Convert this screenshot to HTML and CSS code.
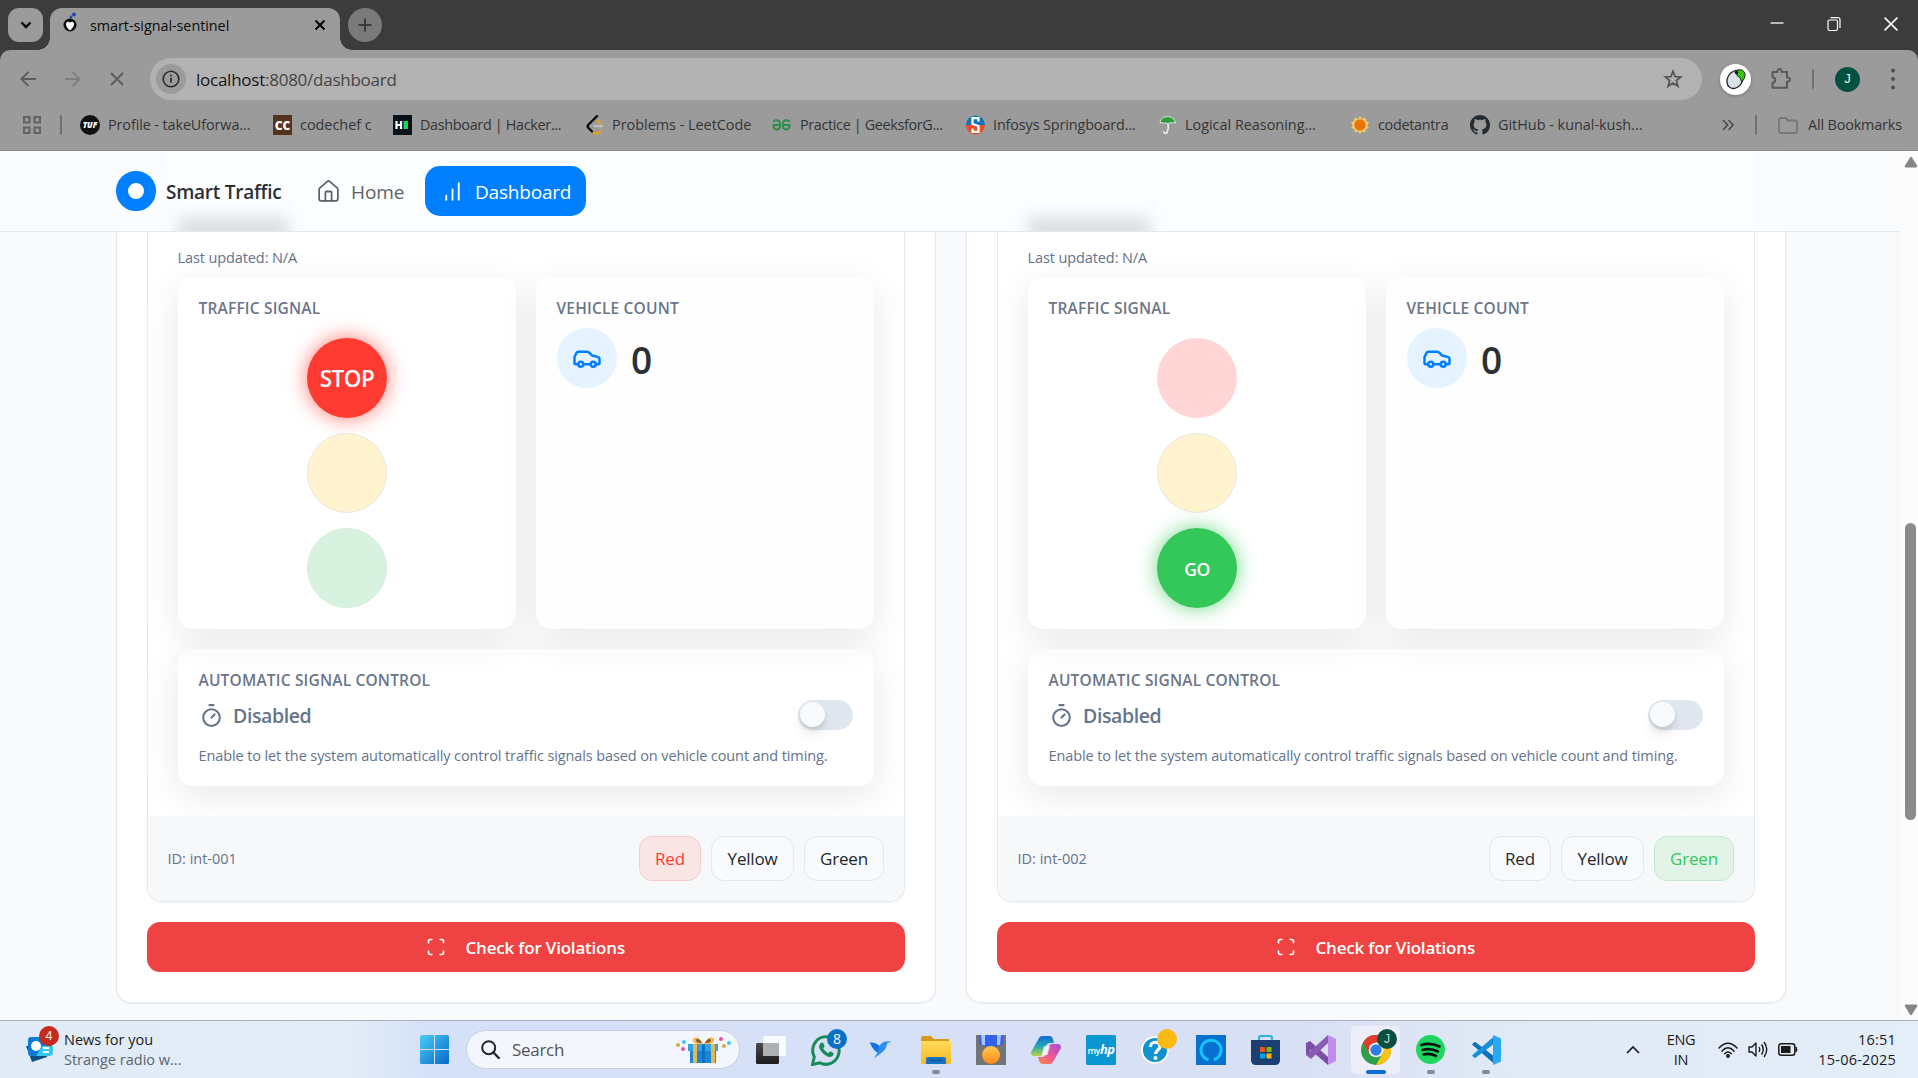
FILE: index.html
```html
<!DOCTYPE html>
<html lang="en">
<head>
<meta charset="utf-8">
<title>smart-signal-sentinel</title>
<link rel="stylesheet" href="styles.css">
</head>
<body>
<svg class="defs" aria-hidden="true">
  <defs>
    <linearGradient id="win" x1="0" y1="0" x2="1" y2="1"><stop offset="0" stop-color="#4ccdf9"/><stop offset="1" stop-color="#0469c9"/></linearGradient>
    <linearGradient id="gold" x1="0" y1="0" x2="0" y2="1"><stop offset="0" stop-color="#ffdc5e"/><stop offset="1" stop-color="#f7b71c"/></linearGradient>
    <linearGradient id="copA" x1="0" y1="0" x2="0" y2="1"><stop offset="0" stop-color="#1668d6"/><stop offset=".5" stop-color="#22a6b8"/><stop offset="1" stop-color="#b7d43a"/></linearGradient>
    <linearGradient id="copB" x1="1" y1="0" x2="0" y2="1"><stop offset="0" stop-color="#a64be0"/><stop offset=".55" stop-color="#ee5a90"/><stop offset="1" stop-color="#f98b45"/></linearGradient>
    <linearGradient id="dark" x1="0" y1="0" x2="0" y2="1"><stop offset="0" stop-color="#4a4a4a"/><stop offset="1" stop-color="#1b1b1b"/></linearGradient>
    <linearGradient id="medal" x1="0" y1="0" x2="0" y2="1"><stop offset="0" stop-color="#ffc94a"/><stop offset="1" stop-color="#ff8a1c"/></linearGradient>
    <symbol id="car" viewBox="0 0 24 24"><g fill="none" stroke="currentColor" stroke-width="2" stroke-linecap="round" stroke-linejoin="round"><path d="M19 17h2c.6 0 1-.4 1-1v-3c0-.9-.7-1.700-1.500-1.900C18.700 10.600 16 10 16 10s-1.300-1.400-2.200-2.300c-.5-.4-1.100-.7-1.800-.7H5c-.6 0-1.100.4-1.400.9l-1.400 2.900A3.700 3.700 0 0 0 2 12v4c0 .6.4 1 1 1h2"/><circle cx="7" cy="17" r="2"/><path d="M9 17h6"/><circle cx="17" cy="17" r="2"/></g></symbol>
    <symbol id="timer" viewBox="0 0 24 24"><g fill="none" stroke="currentColor" stroke-width="2" stroke-linecap="round" stroke-linejoin="round"><path d="M10 2h4M12 14l3-3"/><circle cx="12" cy="14" r="8"/></g></symbol>
    <symbol id="scan" viewBox="0 0 24 24"><path fill="none" stroke="currentColor" stroke-width="2" stroke-linecap="round" stroke-linejoin="round" d="M3 7V5a2 2 0 0 1 2-2h2M17 3h2a2 2 0 0 1 2 2v2M21 17v2a2 2 0 0 1-2 2h-2M7 21H5a2 2 0 0 1-2-2v-2"/></symbol>
  </defs>
</svg>

<header class="titlebar">
  <div class="tab-search"><svg width="12" height="8" viewBox="0 0 12 8"><path d="M1.500 1.500 6 6l4.500-4.500" fill="none" stroke="#000" stroke-width="2.400"/></svg></div>
  <div class="tab">
    <svg class="favicon" width="16" height="22" viewBox="0 0 16 22"><circle cx="7" cy="13" r="6.500" fill="#0a0a0a"/><path d="M7 18.500C3 15 2.500 12.500 3.200 11 4.200 9 6.400 9.400 7 11c.6-1.600 2.800-2 3.800 0 .7 1.500.2 4-3.800 7.500z" fill="#fff"/><circle cx="11" cy="2.500" r="2" fill="#2447a8"/><circle cx="8" cy="5" r="1.500" fill="#2447a8"/></svg>
    <span class="tab-title">smart-signal-sentinel</span>
    <svg class="tab-close" width="12" height="12" viewBox="0 0 12 12"><path d="m1.500 1.500 9 9m0-9-9 9" stroke="#000" stroke-width="2"/></svg>
  </div>
  <div class="new-tab"><svg width="14" height="14" viewBox="0 0 14 14"><path d="M7 .5v13M.5 7h13" stroke="#3a3a3a" stroke-width="2"/></svg></div>
  <div class="window-controls">
    <svg width="14" height="16" viewBox="0 0 14 16"><path d="M.5 7h13" stroke="#fff" stroke-width="1.300"/></svg>
    <svg width="14" height="16" viewBox="0 0 14 16" fill="none" stroke="#fff" stroke-width="1.200"><rect x="1" y="4" width="9.500" height="10.500" rx="1.500"/><path d="M3.500 1.600h7.500a2 2 0 0 1 2 2V12"/></svg>
    <svg width="14" height="14" viewBox="0 0 14 14"><path d="m.6.600 12.800 12.800m0-12.800L.6 13.400" stroke="#fff" stroke-width="1.500"/></svg>
  </div>
</header>

<div class="toolbar">
  <div class="address-row">
    <svg class="nav" width="16" height="16" viewBox="0 0 16 16" fill="none" stroke="#5c5c5c" stroke-width="1.900"><path d="M16 8H1.800M8.500 1 1.500 8l7 7"/></svg>
    <svg class="nav" width="16" height="16" viewBox="0 0 16 16" fill="none" stroke="#7e7e7e" stroke-width="1.900"><path d="M0 8h14.200M7.500 1l7 7-7 7"/></svg>
    <svg class="nav" width="14" height="14" viewBox="0 0 14 14" fill="none" stroke="#5c5c5c" stroke-width="1.800"><path d="m1 1 12 12m0-12L1 13"/></svg>
    <div class="omnibox">
      <span class="site-info"><svg width="18" height="18" viewBox="0 0 18 18"><circle cx="9" cy="9" r="7.800" fill="none" stroke="#2a2a2a" stroke-width="1.600"/><path d="M9 7.800v5M9 4.800v1.700" stroke="#2a2a2a" stroke-width="1.700"/></svg></span>
      <span class="url"><b>localhost</b>:8080/dashboard</span>
      <svg class="star" width="20" height="20" viewBox="0 0 20 20"><path d="m10 2.200 2.100 5.400 5.700.3-4.500 3.600 1.600 5.700L10 14l-4.900 3.200 1.600-5.700L2.200 7.900l5.700-.3z" fill="none" stroke="#555" stroke-width="1.700"/></svg>
    </div>
    <span class="ext"><svg width="22" height="24" viewBox="0 0 22 24"><ellipse cx="10" cy="12.500" rx="7.500" ry="9.500" transform="rotate(32 10 12.500)" fill="#dbe2e6" stroke="#222" stroke-width="1.300"/><path d="M11.500 3.500c4-2 8.500 0 8.500 4.500 0 3-1.500 5-3.500 7-.5-3-1.500-5-4.500-6.500z" fill="#34c80a" stroke="#222" stroke-width="1"/><circle cx="11.500" cy="5.500" r="1.700" fill="#111"/></svg></span>
    <svg class="puzzle" width="22" height="24" viewBox="0 0 22 24"><path d="M2.500 5h5c-.5-4 4.500-4 4.200 0H17v5.500c4-.5 4 4.500 0 4.200v6H2.500v-5c3.500 0 3.500-5.500 0-5.500z" fill="none" stroke="#5a5a5a" stroke-width="2" stroke-linejoin="round"/></svg>
    <i class="bar"></i>
    <span class="avatar">J</span>
    <svg class="dots" width="4" height="22" viewBox="0 0 4 22" fill="#505050"><circle cx="2" cy="2.500" r="2"/><circle cx="2" cy="11" r="2"/><circle cx="2" cy="19.500" r="2"/></svg>
  </div>
  <div class="bookmarks">
    <svg class="apps" width="18" height="18" viewBox="0 0 18 18" fill="none" stroke="#636363" stroke-width="2"><path d="M1 1h5.500v5.500H1zM11.500 1H17v5.500h-5.500zM1 11.500h5.500V17H1zM11.500 11.500H17V17h-5.500z"/></svg>
    <i class="bar"></i>
    <a class="bm w1"><svg width="20" height="20" viewBox="0 0 20 20"><circle cx="10" cy="10" r="10" fill="#111"/><text x="10" y="12.500" class="tuf">TUF</text></svg><span>Profile - takeUforwa...</span></a>
    <a class="bm w2"><svg width="19" height="20" viewBox="0 0 19 20"><path d="M0 0h19v20H0z" fill="#55331f"/><text x="9.500" y="14.500" class="cc">CC</text></svg><span>codechef c</span></a>
    <a class="bm w3"><svg width="19" height="20" viewBox="0 0 19 20"><path d="M0 0h19v20H0z" fill="#09121b"/><path d="M3.500 6v8M8 6v8M3.500 10H8" stroke="#fff" stroke-width="2.200"/><path d="M10.500 6H15v8h-4.500z" fill="#13d95f"/></svg><span>Dashboard | Hacker...</span></a>
    <a class="bm w4"><svg width="18" height="20" viewBox="0 0 18 20" fill="none" stroke-width="2.400" stroke-linecap="round"><path d="M11.500 5.500l3 3M6 16l2 2c1.500 1.500 3.500 1 6.500-2.200" stroke="#e6a020"/><path d="M8.500 11H16" stroke="#bdbdbd"/><path d="M11 1.200 2.500 9.500c-1 1-1 2.300 0 3.500L6 16.500" stroke="#0a0a0a"/></svg><span>Problems - LeetCode</span></a>
    <a class="bm w5"><svg width="19" height="12" viewBox="0 0 19 12" fill="none" stroke="#2f8d46" stroke-width="1.900"><path d="M.5 6h8M10.500 6h8M1.500 3C3 .2 8.200.2 8.200 6c0 5.800-6 5.800-6.800.8M17.500 3C16 .2 10.800.2 10.800 6c0 5.800 6 5.800 6.800.8"/></svg><span>Practice | GeeksforG...</span></a>
    <a class="bm w6"><svg width="19" height="20" viewBox="0 0 19 20"><path d="M0 10a9.500 9.500 0 0 1 19 0z" fill="#1673b8"/><path d="M0 10a9.500 9.500 0 0 0 19 0z" fill="#e5502a"/><path d="M12.500 6.500V3.200h-6V9l6 2v5.800h-6V13.500" fill="none" stroke="#fff" stroke-width="2.200"/></svg><span>Infosys Springboard...</span></a>
    <a class="bm w7"><svg width="18" height="20" viewBox="0 0 18 20"><path d="M1 8C2 0 14-1 17 8c-1.500-1-3-.8-4 .2-1.500-1-3-.6-4 .8-1.500-1.500-3-1.500-4-.2C4 7.500 2.500 7.200 1 8z" fill="#2f9a3a" stroke="#d8f0d8" stroke-width="1"/><path d="M9 8.500c1 4 0 7-1 9-1 1.500-3.500 1-3.200-1" fill="none" stroke="#e6f5e6" stroke-width="1.600"/></svg><span>Logical Reasoning...</span></a>
    <a class="bm w8"><svg width="18" height="20" viewBox="0 0 18 20"><path d="m9 1 2 3 3.500-1.500.2 3.500L18 7.500 16 10l2 3-3.500 1 0 3.500-3.500-1.300L9 19l-2-2.800L3.500 17.500l0-3.500L0 13l2-3-2-2.500L3.300 6l.2-3.500L7 4z" fill="#f3d06a"/><circle cx="9" cy="10" r="5.800" fill="#e8720c"/></svg><span>codetantra</span></a>
    <a class="bm w9"><svg width="20" height="20" viewBox="0 0 16 16"><path fill="#24292e" d="M8 0C3.580 0 0 3.580 0 8c0 3.540 2.290 6.530 5.470 7.590.4.070.55-.17.55-.38 0-.19-.01-.82-.01-1.490-2.010.37-2.530-.49-2.690-.94-.09-.23-.48-.94-.82-1.130-.28-.15-.68-.52-.01-.53.63-.01 1.080.58 1.230.82.72 1.210 1.870.87 2.330.66.07-.52.28-.87.51-1.070-1.780-.2-3.640-.89-3.640-3.950 0-.87.31-1.590.82-2.150-.08-.2-.36-1.020.08-2.120 0 0 .67-.21 2.200.82.64-.18 1.320-.27 2-.27s1.360.09 2 .27c1.530-1.040 2.200-.82 2.200-.82.44 1.100.16 1.920.08 2.120.51.56.82 1.270.82 2.150 0 3.070-1.870 3.750-3.650 3.950.29.25.54.73.54 1.480 0 1.070-.01 1.930-.01 2.200 0 .21.15.46.55.38A8.010 8.010 0 0 0 16 8c0-4.420-3.580-8-8-8z"/></svg><span>GitHub - kunal-kush...</span></a>
    <svg class="more" width="12" height="12" viewBox="0 0 12 12"><path d="m1 1 4.500 5L1 11M6.500 1 11 6l-4.500 5" fill="none" stroke="#4e4e4e" stroke-width="1.700"/></svg>
    <i class="bar"></i>
    <svg class="folder" width="20" height="17" viewBox="0 0 20 17"><path d="M1 3a2 2 0 0 1 2-2h4.500l2.500 2.500h7a2 2 0 0 1 2 2V14a2 2 0 0 1-2 2H3a2 2 0 0 1-2-2z" fill="none" stroke="#777" stroke-width="1.800"/></svg>
    <span class="all">All Bookmarks</span>
  </div>
</div>

<div class="viewport">
  <div class="page">
    <nav class="site-nav">
      <span class="logo"></span>
      <span class="brand">Smart Traffic</span>
      <a class="home"><svg width="25" height="25" viewBox="0 0 24 24" fill="none" stroke="currentColor" stroke-width="1.700" stroke-linecap="round" stroke-linejoin="round"><path d="M15 21v-8a1 1 0 0 0-1-1h-4a1 1 0 0 0-1 1v8"/><path d="M3 10a2 2 0 0 1 .7-1.500l7-6a2 2 0 0 1 2.600 0l7 6A2 2 0 0 1 21 10v9a2 2 0 0 1-2 2H5a2 2 0 0 1-2-2z"/></svg><span>Home</span></a>
      <a class="dash"><svg width="25" height="25" viewBox="0 0 24 24" fill="none" stroke="currentColor" stroke-width="1.800" stroke-linecap="round"><path d="M6 20v-4M12 20V10M18 20V4"/></svg><span>Dashboard</span></a>
      <i class="ghost ghost-left"></i><i class="ghost ghost-right"></i>
    </nav>
    <main class="grid">
      <section class="outer">
        <article class="junction">
          <div class="body">
            <p class="updated">Last updated: N/A</p>
            <div class="pair">
              <div class="card signal">
                <h3>TRAFFIC SIGNAL</h3>
                <div class="lights"><span class="light red on">STOP</span><span class="light yellow"></span><span class="light green"></span></div>
              </div>
              <div class="card">
                <h3>VEHICLE COUNT</h3>
                <div class="count"><span class="car"><svg width="30" height="30"><use href="#car"/></svg></span><b>0</b></div>
              </div>
            </div>
            <div class="card auto">
              <h3>AUTOMATIC SIGNAL CONTROL</h3>
              <div class="control"><svg width="25" height="25"><use href="#timer"/></svg><b>Disabled</b><span class="switch"></span></div>
              <p class="hint">Enable to let the system automatically control traffic signals based on vehicle count and timing.</p>
            </div>
          </div>
          <footer class="foot"><span class="id">ID: int-001</span><button class="r active-red">Red</button><button class="y">Yellow</button><button class="g">Green</button></footer>
        </article>
        <button class="check"><svg width="20" height="20"><use href="#scan"/></svg><span>Check for Violations</span></button>
      </section>
      <section class="outer">
        <article class="junction">
          <div class="body">
            <p class="updated">Last updated: N/A</p>
            <div class="pair">
              <div class="card signal">
                <h3>TRAFFIC SIGNAL</h3>
                <div class="lights"><span class="light red"></span><span class="light yellow"></span><span class="light green on">GO</span></div>
              </div>
              <div class="card">
                <h3>VEHICLE COUNT</h3>
                <div class="count"><span class="car"><svg width="30" height="30"><use href="#car"/></svg></span><b>0</b></div>
              </div>
            </div>
            <div class="card auto">
              <h3>AUTOMATIC SIGNAL CONTROL</h3>
              <div class="control"><svg width="25" height="25"><use href="#timer"/></svg><b>Disabled</b><span class="switch"></span></div>
              <p class="hint">Enable to let the system automatically control traffic signals based on vehicle count and timing.</p>
            </div>
          </div>
          <footer class="foot"><span class="id">ID: int-002</span><button class="r">Red</button><button class="y">Yellow</button><button class="g active-green">Green</button></footer>
        </article>
        <button class="check"><svg width="20" height="20"><use href="#scan"/></svg><span>Check for Violations</span></button>
      </section>
    </main>
  </div>
  <div class="scrollbar">
    <svg width="14" height="12" viewBox="0 0 14 12"><path d="M6 1.500q1-1.500 2 0l5 8q.8 2-1 2H2q-1.800 0-1-2z" fill="#858585"/></svg>
    <i class="thumb"></i>
    <svg width="14" height="12" viewBox="0 0 14 12"><path d="M6 10.500q1 1.500 2 0l5-8q.8-2-1-2H2q-1.800 0-1 2z" fill="#858585"/></svg>
  </div>
</div>

<footer class="taskbar">
  <div class="news">
    <div class="news-icon"><svg width="28" height="26" viewBox="0 0 28 26"><path d="M0 9 6 25l15-5V8z" fill="#0c4f80"/><path d="M2 3a3 3 0 0 1 3-3h21v15a4 4 0 0 1-4 4H5a3 3 0 0 1-3-3z" fill="#0f7ad3"/><path d="M16 9h11v6a4 4 0 0 1-4 4H10z" fill="#35c8f4"/><circle cx="10" cy="9" r="5" fill="#fff"/><path d="M17 11h6M17 15h6" stroke="#fff" stroke-width="2"/></svg><span class="badge red-badge">4</span></div>
    <div class="news-text"><span>News for you</span><span class="dim">Strange radio w...</span></div>
  </div>
  <div class="apps-row">
    <svg class="start" width="29" height="29" viewBox="0 0 29 29"><path d="M1.500 0H14v14H0V1.500A1.500 1.500 0 0 1 1.500 0zM15 0h12.500A1.500 1.500 0 0 1 29 1.500V14H15zM0 15h14v14H1.500A1.500 1.500 0 0 1 0 27.500zM15 15h14v12.500a1.500 1.500 0 0 1-1.500 1.500H15z" fill="url(#win)"/></svg>
    <div class="search">
      <svg width="19" height="19" viewBox="0 0 19 19"><circle cx="7.700" cy="7.700" r="6.500" fill="none" stroke="#26262c" stroke-width="2"/><path d="m12.500 12.500 5.300 5.500" stroke="#26262c" stroke-width="2.400" stroke-linecap="round"/></svg>
      <span>Search</span>
      <svg class="gift" width="58" height="28" viewBox="0 0 58 28"><path d="M13 8h30v7H13z" fill="#2ea3e8"/><path d="M15 15h26v12H15z" fill="#1a86d6"/><path d="M18 8h4v19h-4zM36 8h4v19h-4z" fill="#e8b64c"/><path d="M27 8h3v19h-3z" fill="#0e6fc0"/><path d="M28 8C24 0 20 0 18 3c-1 3 2 6 10 5zM29 8c4-8 8-8 10-5 1 3-2 6-10 5z" fill="#f1b855"/><path d="M27 7c-2-4-5-5-6-3 0 2 2 3 6 3zM30 7c2-4 5-5 6-3 0 2-2 3-6 3z" fill="#8a5425"/><circle cx="9" cy="6" r="2" fill="#45c7ee"/><circle cx="3" cy="9" r="2" fill="#d9a64a"/><circle cx="8" cy="13" r="2" fill="#e552a6"/><circle cx="46" cy="3" r="2" fill="#e552a6"/><circle cx="54" cy="7" r="2" fill="#45c7ee"/><circle cx="49" cy="10" r="2" fill="#d9a64a"/></svg>
    </div>
    <div class="app"><svg width="30" height="28" viewBox="0 0 30 28"><rect y="7" width="23" height="21" rx="1.500" fill="url(#dark)"/><rect x="7" width="23" height="20" rx="1.500" fill="#fff" fill-opacity=".82"/><path d="M7 7h16v13H8.500A1.500 1.500 0 0 1 7 18.500z" fill="#aeb0b4"/></svg></div>
    <div class="app"><svg width="30" height="32" viewBox="0 0 30 32"><path d="M1.500 30.500 3.300 23A13.200 13.800 0 1 1 9 28.800z" fill="none" stroke="#1a8a58" stroke-width="3"/><path d="M9 10c1-2 3-2 3.500-.5l1 2.500c.2 1-1 1.500-1.300 2.300 1 2 3 4 5 4.700 1-.5 1.500-2 2.500-1.500l2.700 1.500c.8 1-.5 4-3.400 4C14 23 8 16 8 12.500z" fill="#1a8a58"/></svg><span class="badge blue-badge">8</span></div>
    <div class="app"><svg width="22" height="18" viewBox="0 0 22 18"><path d="M0 1.500c4 0 7 1 9.500 3.500C11.500 1.500 14 0 17 .5L22 .3 17 2.500c-.5 3.500-1.500 6-4.500 8.500L4 17.500l3.500-6C4 9.500 1.500 5.500 0 1.500z" fill="#2a8ff5"/><path d="M0 1.500c4 0 7 1 9.500 3.500L7.500 11.500C4 9.500 1.500 5.500 0 1.500z" fill="#0f74e4"/></svg></div>
    <div class="app"><svg width="30" height="28" viewBox="0 0 30 28"><path d="M0 2q0-2 2-2h8l3 3h15v6H0z" fill="#d69b16"/><path d="M0 5h28q2 0 2 2v19q0 2-2 2H2q-2 0-2-2z" fill="url(#gold)"/><path d="M5 28v-5q0-2 2-2h16q2 0 2 2v5z" fill="#1673c4"/><path d="M9 24.500h12" stroke="#0d5490" stroke-width="1.500"/></svg><i class="running"></i></div>
    <div class="app"><svg width="30" height="30" viewBox="0 0 30 30"><path d="M0 0h30v30H0z" fill="#737478"/><path d="M3 0h24v9q-12 6-24 0z" fill="#3560ee"/><path d="M5 0h4v10H6zM21 0h4l-1 10h-3z" fill="#a9c5ff"/><circle cx="15" cy="20" r="9" fill="url(#medal)"/></svg></div>
    <div class="app"><svg width="30" height="28" viewBox="0 0 30 28"><path d="M8 2q1-2 3-2h8q2 0 3 3l1 4h-4q-3 0-4 3l-3 8q-1 2-3 2H3q-3 0-3-4z" fill="url(#copA)"/><path d="M22 26q-1 2-3 2h-8q-2 0-3-3l-1-4h4q3 0 4-3l3-8q1-2 3-2h6q3 0 3 4z" fill="url(#copB)"/><path d="M13 10h6l-2.500 9h-6z" fill="#fff" opacity=".75"/></svg></div>
    <div class="app"><svg width="30" height="30" viewBox="0 0 30 30"><rect width="30" height="30" rx="1.500" fill="#0996d3"/><text x="15" y="19" class="hp"><tspan>my</tspan><tspan class="hp-b">hp</tspan></text></svg></div>
    <div class="app"><svg width="29" height="29" viewBox="0 0 29 29"><circle cx="14" cy="15" r="13" fill="#0f93ce" stroke="#fff" stroke-width="1.800"/><path d="M9.500 12c0-6.500 9.500-6 9.500-.5 0 3.500-4.500 3.500-4.500 7.500" fill="none" stroke="#fff" stroke-width="3.200"/><circle cx="14.500" cy="23" r="2" fill="#fff"/></svg><span class="badge yellow-badge"></span></div>
    <div class="app"><svg width="30" height="30" viewBox="0 0 30 30"><path d="M0 0h30v30H0z" fill="#0871d0"/><path d="M12.500 24.800a10 10 0 1 1 5.500-.1" fill="none" stroke="#14c4fb" stroke-width="3"/></svg></div>
    <div class="app"><svg width="29" height="30" viewBox="0 0 29 30"><path d="M8 6V3q0-2 2-2h9q2 0 2 2v3" fill="none" stroke="#27b2ee" stroke-width="2"/><path d="M0 5h29v20q0 5-5 5H5q-5 0-5-5z" fill="#1b3f70"/><path d="M9 12h5v5H9z" fill="#f25022"/><path d="M15.500 12h5v5h-5z" fill="#7fba00"/><path d="M9 18.500h5v5H9z" fill="#00a4ef"/><path d="M15.500 18.500h5v5h-5z" fill="#ffb900"/></svg></div>
    <div class="app"><svg width="30" height="30" viewBox="0 0 30 30"><path d="M0 8 4 6l18 16v8L4 14.500V22l-4-2z" fill="#7a4fa6"/><path d="M0 20 22 0v8L5 24z" fill="#8a5bb5"/><path d="m22 0 8 4v22l-8 4z" fill="#c18cec"/></svg></div>
    <div class="app active"><svg width="30" height="30" viewBox="0 0 30 30"><circle cx="15" cy="15" r="15" fill="#2ea04c"/><path d="M2 7.500A15 15 0 0 1 28 7.500H15L8.500 19z" fill="#e33b2e"/><path d="M28 7.500A15 15 0 0 1 15 30l6.500-11.500L15 7.500z" fill="#fbc116"/><circle cx="15" cy="15" r="7.300" fill="#fff"/><circle cx="15" cy="15" r="5.700" fill="#2f7de9"/></svg><span class="badge green-badge">J</span><i class="running current"></i></div>
    <div class="app"><svg width="29" height="29" viewBox="0 0 29 29"><circle cx="14.500" cy="14.500" r="14.500" fill="#1fd760"/><path d="M5.500 10q9-2.800 18 1.500M6.500 15q8-2.300 15.500 1.500M7.500 19.500q6.500-1.800 12.500 1.500" fill="none" stroke="#08120b" stroke-width="2.600" stroke-linecap="round"/></svg><i class="running"></i></div>
    <div class="app"><svg width="30" height="30" viewBox="0 0 30 30"><path d="M1 9.500 3 7.500q1-.8 2 0L24 22v7.500z" fill="#0d72b8"/><path d="m1 20.500 2 2q1 .8 2 0L24 8V.500z" fill="#1690d8"/><path d="m22 0 8 3.500v23L22 30z" fill="#2aa9f2"/></svg><i class="running"></i></div>
  </div>
  <div class="tray">
    <svg class="chev" width="14" height="9" viewBox="0 0 14 9"><path d="m1 8 6-6 6 6" fill="none" stroke="#1c1c1c" stroke-width="1.700"/></svg>
    <div class="lang"><span>ENG</span><span>IN</span></div>
    <svg class="wifi" width="20" height="16" viewBox="0 0 20 16" fill="none" stroke="#1a1a1a" stroke-width="1.500" stroke-linecap="round"><path d="M1 6q9-9.500 18 0M4 9q6-6.500 12 0M6.800 11.700q3.200-3.400 6.400 0"/><circle cx="10" cy="14" r="1.200" fill="#1a1a1a"/></svg>
    <svg class="vol" width="20" height="17" viewBox="0 0 20 17" fill="none" stroke="#1a1a1a" stroke-width="1.400" stroke-linejoin="round"><path d="M1 6h3l4-4v13l-4-4H1zM11 6q1.500 2.500 0 5M13.500 3.500q3.500 5 0 10M16 1q5.500 7.500 0 15"/></svg>
    <svg class="bat" width="20" height="13" viewBox="0 0 20 13"><rect x=".8" y=".8" width="16" height="11.400" rx="2.500" fill="none" stroke="#1a1a1a" stroke-width="1.500"/><path d="M3 3h9.500v7H3z" fill="#1a1a1a"/><path d="M18 4q2 2.500 0 5z" fill="#1a1a1a" stroke="#1a1a1a"/></svg>
    <div class="clock"><span>16:51</span><span>15-06-2025</span></div>
  </div>
</footer>
</body>
</html>
```

FILE: styles.css
```css
* { box-sizing: border-box; }

body {
  margin: 0;
  width: 1918px;
  height: 1078px;
  overflow: hidden;
  display: flex;
  flex-direction: column;
  background: #3c3c3c;
  font-family: "Open Sans", "Noto Sans", sans-serif;
  font-size: 14px;
  white-space: nowrap;
}

svg { display: block; flex: none; }
.defs { position: absolute; width: 0; height: 0; }
button { font: inherit; padding: 0; }
p, h3 { margin: 0; }

/* Browser title bar */
.titlebar { height: 50px; display: flex; align-items: flex-start; padding: 8px 20px 0 8px; background: #3c3c3c; flex: none; }
.tab-search { width: 35px; height: 34px; border-radius: 11px; background: #9b9b9b; display: grid; place-items: center; }
.tab {
  position: relative;
  width: 290px; height: 42px; margin-left: 7px; padding: 0 14px 8px 13px;
  border-radius: 12px 12px 0 0; background: #9b9b9b;
  display: flex; align-items: center;
}
.tab::before, .tab::after { content: ""; position: absolute; bottom: 0; width: 12px; height: 12px; }
.tab::before { left: -12px; background: radial-gradient(circle at 0 0, transparent 11.500px, #9b9b9b 12px); }
.tab::after { right: -12px; background: radial-gradient(circle at 100% 0, transparent 11.500px, #9b9b9b 12px); }
.favicon { margin-top: -4px; }
.tab-title { margin-left: 11px; color: #0c0c0c; font-size: 14.400px; letter-spacing: -.05px; }
.tab-close { margin-left: auto; }
.new-tab { width: 34px; height: 34px; margin-left: 8px; border-radius: 50%; background: #7a7a7a; display: grid; place-items: center; }
.window-controls { margin-left: auto; margin-top: 8px; display: flex; align-items: center; gap: 43px; }

/* Toolbar */
.toolbar { height: 101px; background: #9b9b9b; border-bottom: 1px solid #8a8a8a; border-radius: 10px 10px 0 0; flex: none; }
.address-row { display: flex; align-items: center; height: 42px; margin-top: 8px; padding-left: 20px; }
.nav { margin-right: 29px; }
.omnibox { width: 1552px; height: 42px; margin-left: -3px; border-radius: 21px; background: #b2b2b2; display: flex; align-items: center; padding: 0 19px 0 6px; }
.site-info { width: 30px; height: 30px; border-radius: 50%; background: #9b9b9b; display: grid; place-items: center; }
.url { margin: 0 0 0 10px; font-size: 17px; letter-spacing: -.25px; color: #454545; }
.url b { font-weight: 400; color: #161616; }
.star { margin-left: auto; }
.ext { width: 31px; height: 31px; margin-left: 18px; border-radius: 50%; background: #fff; display: grid; place-items: center; box-shadow: 0 1px 3px #5558; }
.puzzle { margin-left: 19px; }
.bar { width: 2px; height: 20px; background: #707070; border-radius: 1px; flex: none; }
.address-row .bar { margin-left: 20px; }
.avatar { width: 25px; height: 25px; margin-left: 21px; padding-bottom: 1px; border-radius: 50%; background: #00513f; color: #e8f0ee; font: 13px/24px "Liberation Sans", sans-serif; text-align: center; }
.dots { margin-left: 31px; }

.bookmarks { display: flex; align-items: center; height: 50px; padding-left: 23px; color: #353535; font-size: 14.400px; }
.bookmarks span { margin-top: -1px; }
.bookmarks > .bar { margin-left: 19px; }
.bm { display: flex; align-items: center; gap: 8px; flex: none; }
.w1 { width: 193px; margin-left: 18px; letter-spacing: -.1px; }
.w2 { width: 120px; letter-spacing: 0; }
.w3 { width: 193px; letter-spacing: -.32px; }
.w4 { width: 186px; }
.w5 { width: 194px; gap: 9px; letter-spacing: -.35px; }
.w6 { width: 193px; letter-spacing: -.12px; }
.w7 { width: 192px; }
.w8 { width: 119px; gap: 9px; letter-spacing: -.3px; }
.w9 { width: 252px; }
.tuf { font: italic 800 8px "Open Sans", sans-serif; fill: #fff; text-anchor: middle; letter-spacing: 0; }
.cc { font: 800 12px "Open Sans", sans-serif; fill: #fff; text-anchor: middle; letter-spacing: 0; }
.bookmarks .more + .bar { margin-left: 21px; }
.folder { margin-left: 21px; }
.bookmarks .all { margin-left: 10px; letter-spacing: -.15px; }

/* Web page */
.viewport { display: flex; height: 869px; flex: none; }
.page { width: 1901px; overflow: hidden; background: #f8fafc; }
.site-nav {
  position: relative; overflow: hidden;
  height: 81px; padding-left: 116px;
  display: flex; align-items: center;
  background: linear-gradient(90deg, #f9fbfd 100px, #fcfdff 180px, #fcfdff 1740px, #f9fbfd 1800px);
  border-bottom: 1px solid #e2e8f0;
}
.logo { width: 40px; height: 40px; border-radius: 50%; background: #fff; border: 12.500px solid #007fff; }
.brand { width: 115px; margin-left: 10px; padding-top: 2px; font-size: 19px; letter-spacing: -.25px; font-weight: 600; color: #2c3035; }
.home { display: flex; align-items: center; gap: 10px; margin-left: 35px; width: 90px; color: #5f6368; font-size: 19px; letter-spacing: -.1px; }
.dash { display: flex; align-items: center; gap: 10px; margin-left: 19px; width: 161px; height: 50px; padding-left: 15px; border-radius: 15px; background: #007fff; color: #fff; font-size: 19px; letter-spacing: -.2px; }
.home span, .dash span { padding-top: 2px; }
.ghost { position: absolute; top: 66px; height: 24px; background: rgba(70, 80, 90, .18); filter: blur(8px); }
.ghost-left { left: 178px; width: 110px; }
.ghost-right { left: 1028px; width: 122px; }

.grid { display: grid; grid-template-columns: 820px 820px; gap: 30px; padding-left: 116px; }
.outer { height: 771px; padding: 0 30px; background: #fff; border: 1px solid #e2e8f0; border-top: 0; border-radius: 0 0 15px 15px; box-shadow: 0 1px 2px rgba(0, 0, 0, .05); }
.junction { height: 670px; overflow: hidden; border: 1px solid #e2e8f0; border-top: 0; border-radius: 0 0 15px 15px; box-shadow: 0 1px 2px rgba(0, 0, 0, .05); }
.body { height: 584px; padding: 16px 30px 0 30px; overflow: hidden; }
.updated { height: 20px; line-height: 20px; font-size: 14.500px; letter-spacing: -.1px; text-indent: -.5px; color: #64748b; }
.pair { display: grid; grid-template-columns: 338px 338px; gap: 20px; margin-top: 9px; }
.card { height: 352px; padding: 21px; border-radius: 15px; background: #fff; box-shadow: 0 10px 38px rgba(0, 0, 0, .09); }
.pair .card:last-child { background: #fefefe; }
h3 { height: 22px; line-height: 21px; font-size: 15.500px; font-weight: 600; letter-spacing: .18px; text-indent: -.5px; color: #6b7688; }
.lights { display: flex; flex-direction: column; align-items: center; gap: 15px; padding-top: 18px; }
.light { width: 80px; height: 80px; border-radius: 50%; display: grid; place-items: center; color: #fff; font-weight: 600; }
.light.red { background: #ffd6d5; }
.light.yellow { background: #fff4cf; border: 1px solid #e9e7dc; }
.light.green { background: #d7f3df; border: 1px solid #d6ecdf; }
.light.red.on { background: #ff3a30; padding-top: 1px; box-shadow: 0 0 20px rgba(255, 59, 48, .7); font-size: 22.500px; letter-spacing: -.5px; }
.light.green.on { background: #34c759; border: 0; padding-top: 2px; box-shadow: 0 0 20px rgba(52, 199, 89, .7); font-size: 17.500px; letter-spacing: -.5px; }
.count { display: flex; align-items: center; gap: 14px; margin-top: 8px; height: 60px; }
.car { width: 60px; height: 60px; border-radius: 50%; background: #e5f2ff; color: #007fff; display: grid; place-items: center; }
.count b { font-size: 37px; font-weight: 600; color: #2c3035; margin-top: 2px; }
.card.auto { height: 137px; margin-top: 20px; }
.control { display: flex; align-items: center; height: 30px; margin-top: 8px; color: #64748b; }
.control b { margin: 1px 0 0 9px; font-size: 19.500px; letter-spacing: -.4px; font-weight: 600; }
.switch { width: 55px; height: 30px; margin-left: auto; padding: 2px; border-radius: 15px; background: #e0e7ef; }
.switch::before { content: ""; display: block; width: 25px; height: 25px; border-radius: 50%; background: #f8fafc; box-shadow: 0 8px 12px rgba(0, 0, 0, .08), 0 3px 5px rgba(0, 0, 0, .08); }
.hint { height: 20px; line-height: 20px; margin-top: 16px; font-size: 14.500px; letter-spacing: -.11px; text-indent: -.5px; color: #64748b; }
.foot { height: 85px; padding: 0 20px 0 19.500px; display: flex; align-items: center; gap: 10px; background: #f6f8fa; }
.id { margin-right: auto; font-size: 14.500px; letter-spacing: 0; color: #64748b; }
.foot button { height: 45px; border: 1px solid #e2e8f0; border-radius: 13px; background: #f8fafc; color: #22272c; font-size: 17px; letter-spacing: -.2px; font-weight: 500; }
.foot .r { width: 62px; }
.foot .y { width: 83px; }
.foot .g { width: 80px; }
.foot .active-red { background: #fae5e5; border-color: #f5cccd; color: #ff3b30; }
.foot .active-green { background: #e2f4e8; border-color: #c3e8cf; color: #34c759; }
.check { width: 758px; height: 50px; margin-top: 20px; padding-left: 279px; border: 0; border-radius: 13px; background: #ef4343; color: #fff; display: flex; align-items: center; gap: 19.500px; font-size: 17px; letter-spacing: -.2px; font-weight: 600; }

.scrollbar { width: 17px; padding: 5px 0 4px 2px; background: #fcfcfc; display: flex; flex-direction: column; align-items: center; }
.thumb { width: 11px; height: 297px; margin: 355px 0 184px; border-radius: 6px; background: #8b8b8b; }

/* Taskbar */
.taskbar {
  height: 58px; display: flex; align-items: center; flex: none;
  border-top: 1px solid #a9b0ba; color: #1b1b1b;
  background: linear-gradient(90deg, #e0ebf7 0, #e3edf8 340px, #d5e1f8 430px, #d6e0f7 900px, #d9e0f4 1300px, #e0e9f6 1500px, #e4eef8 1918px);
}
.news { width: 420px; padding-left: 26px; display: flex; align-items: center; gap: 11px; }
.news-icon { position: relative; width: 27px; }
.news-text, .lang, .clock { display: flex; flex-direction: column; line-height: 20px; font-size: 14.500px; }
.dim { color: #5a6470; }
.badge { position: absolute; width: 20px; height: 20px; border-radius: 50%; display: grid; place-items: center; color: #fff; font-size: 12px; line-height: 1; }
.red-badge { left: 13px; top: -11px; background: #c42b1c; }
.apps-row { display: flex; align-items: center; }
.search { width: 274px; height: 39px; margin: 0 3px 0 17px; padding: 0 6px 0 14px; display: flex; align-items: center; border-radius: 20px; border: 1px solid #c8cfdf; background: #f3f7fd; }
.search span { margin-left: 12px; font-size: 17px; letter-spacing: -.3px; color: #50535a; }
.gift { margin-left: auto; }
.app { position: relative; width: 55px; height: 48px; display: grid; place-items: center; }
.app.active::before { content: ""; position: absolute; inset: 0 3px; border-radius: 5px; background: #eceff9; }
.app > svg { position: relative; }
.app .badge { left: 29px; top: 3px; }
.blue-badge { background: #0a6fc8; font-size: 14px; }
.yellow-badge { background: #fdb913; }
.green-badge { background: #0a4f42; color: #b9d8d0; font: 13px/20px "Liberation Sans", sans-serif; }
.running { position: absolute; left: 24px; bottom: 0; width: 8px; height: 4px; border-radius: 2px; background: #80879a; }
.running.current { left: 18px; width: 20px; background: #0a6fd0; }
.hp { font: 600 9px "Open Sans", sans-serif; fill: #fff; text-anchor: middle; letter-spacing: -.5px; }
.hp-b { font-size: 13px; font-style: italic; font-weight: 700; }
.tray { margin-left: auto; padding-right: 22px; display: flex; align-items: center; }
.lang { width: 30px; margin-left: 26px; text-align: center; letter-spacing: -.3px; }
.wifi { margin-left: 22px; }
.vol { margin-left: 10px; }
.bat { margin-left: 10px; }
.clock { width: 78px; margin-left: 20px; align-items: flex-end; letter-spacing: .2px; }
```
